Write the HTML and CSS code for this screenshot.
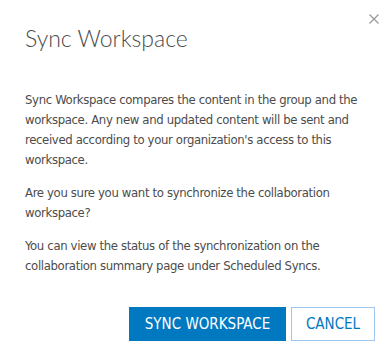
FILE: index.html
```html
<!DOCTYPE html>
<html lang="en">
  <head>
    <meta charset="UTF-8" />
    <meta name="viewport" content="width=device-width, initial-scale=1.0" />
    <title>Sync Workspace</title>
    <link rel="stylesheet" href="styles.css">
  </head>
  <body>
    <div class="dialog">
      <button class="close" aria-label="Close">
        <svg width="10" height="10" viewBox="0 0 10 10">
          <path d="M0.5 0.5 L9.5 9.5 M9.5 0.5 L0.5 9.5" stroke="#9a9a9a" stroke-width="1.3" fill="none" />
        </svg>
      </button>

      <h1 class="title">Sync Workspace</h1>

      <div class="content">
        <p>Sync Workspace compares the content in the group and the workspace. Any new and updated content will be sent and received according to your organization's access to this workspace.</p>
        <p>Are you sure you want to synchronize the collaboration workspace?</p>
        <p>You can view the status of the synchronization on the collaboration summary page under Scheduled Syncs.</p>
      </div>

      <div class="footer">
        <button class="btn btn-primary">SYNC WORKSPACE</button>
        <button class="btn btn-clear">CANCEL</button>
      </div>
    </div>
  </body>
</html>
```

FILE: styles.css
```css
body {
  margin: 0;
  background: #fff;
  color: #4c4c4c;
  font-family: "DejaVu Sans Condensed", "DejaVu Sans", sans-serif;
}

.dialog {
  position: relative;
  width: 390px;
  height: 353px;
  box-sizing: border-box;
  padding: 0 15px 0 25px;
}

.close {
  position: absolute;
  top: 14px;
  right: 11px;
  padding: 0;
  border: none;
  background: none;
  cursor: pointer;
  line-height: 0;
}

.title {
  margin: 0;
  padding-top: 22px;
  font-family: "Lato", sans-serif;
  font-weight: 300;
  font-size: 23px;
  line-height: 32px;
  color: #4c4c4c;
}

.content {
  width: 340px;
  margin-top: 36px;
}

.content p {
  margin: 0 0 13px;
  font-size: 13px;
  line-height: 20px;
  letter-spacing: -0.35px;
}

.content p:last-child {
  margin-bottom: 0;
}

.footer {
  display: flex;
  justify-content: flex-end;
  gap: 5px;
  margin-top: 31px;
}

.btn {
  height: 34px;
  padding: 0;
  font-family: "DejaVu Sans Condensed", "DejaVu Sans", sans-serif;
  font-size: 15px;
  cursor: pointer;
}

.btn-primary {
  background: #0079c1;
  color: #fff;
  border: 1px solid #0079c1;
  width: 157px;
}

.btn-clear {
  background: #fff;
  color: #0079c1;
  border: 1px solid #9ec6f2;
  width: 84px;
}
```
